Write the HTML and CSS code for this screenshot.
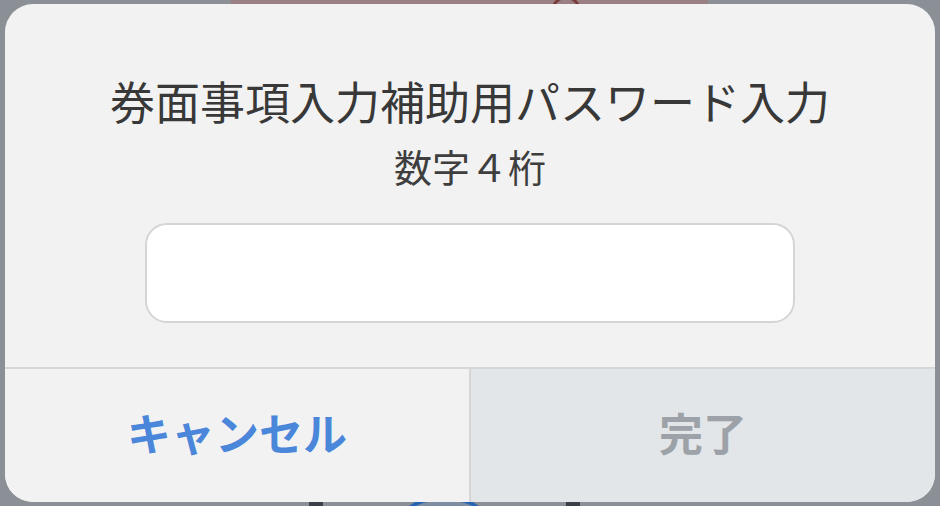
FILE: index.html
```html
<!DOCTYPE html>
<html lang="ja">
<head>
    <meta charset="UTF-8">
    <meta name="viewport" content="width=device-width, initial-scale=1">
    <title>パスワード入力</title>
    <link rel="stylesheet" href="styles.css">
</head>
<body>
    <!-- page content behind the overlay, mostly hidden -->
    <div class="backdrop">
        <div class="bg-button"><span class="bg-icon"></span></div>
        <div class="bg-bar bar-left"></div>
        <div class="bg-ring"></div>
        <div class="bg-bar bar-right"></div>
    </div>

    <div class="dialog">
        <div class="dialog-body">
            <h2 class="dialog-title">券面事項入力補助用パスワード入力</h2>
            <p class="dialog-sub">数字４桁</p>
            <input class="pin-input" type="password" inputmode="numeric" maxlength="4">
        </div>
        <div class="dialog-actions">
            <button class="action-btn cancel-btn">キャンセル</button>
            <button class="action-btn done-btn" disabled>完了</button>
        </div>
    </div>
</body>
</html>
```

FILE: styles.css
```css
html, body {
    margin: 0;
    height: 100%;
}

body {
    font-family: "Noto Sans CJK JP", "Noto Sans", sans-serif;
    background-color: #8a9096;
    overflow: hidden;
    position: relative;
}

.backdrop {
    position: absolute;
    inset: 0;
    z-index: 0;
    overflow: hidden;
}

.bg-button {
    position: absolute;
    left: 231px;
    top: -40px;
    width: 477px;
    height: 60px;
    border-radius: 12px;
    background-color: #9a8082;
}

.bg-icon {
    position: absolute;
    left: 320px;
    top: 36px;
    width: 30px;
    height: 30px;
    border: 3px solid #7b3b3d;
    border-radius: 50%;
    box-sizing: border-box;
}

.bg-bar {
    position: absolute;
    bottom: 0;
    width: 14px;
    height: 12px;
    background-color: #3b4047;
}

.bar-left {
    left: 309px;
}

.bar-right {
    left: 566px;
}

.bg-ring {
    position: absolute;
    left: 404px;
    bottom: -30px;
    width: 80px;
    height: 40px;
    border: 4px solid #2a63b0;
    border-radius: 50%;
    box-sizing: border-box;
    background-color: #7f8da2;
}

.dialog {
    position: relative;
    z-index: 1;
    width: 930px;
    height: 498px;
    margin: 4px 0 0 5px;
    background-color: #f2f2f2;
    border-radius: 28px;
    overflow: hidden;
    display: flex;
    flex-direction: column;
}

.dialog-body {
    flex: 1;
    display: flex;
    flex-direction: column;
    align-items: center;
    padding-top: 71px;
}

.dialog-title {
    margin: 0;
    font-size: 45px;
    line-height: 52px;
    font-weight: 400;
    color: #383838;
}

.dialog-sub {
    margin: 19px 0 0;
    font-size: 38px;
    line-height: 40px;
    color: #3e3e3e;
}

.pin-input {
    margin-top: 37px;
    width: 650px;
    height: 100px;
    box-sizing: border-box;
    border: 2px solid #d5d5d5;
    border-radius: 22px;
    background-color: #ffffff;
    outline: none;
}

.dialog-actions {
    height: 133px;
    display: flex;
    border-top: 2px solid #d6d6d6;
}

.action-btn {
    flex: 1;
    border: none;
    margin: 0;
    padding: 0 0 8px;
    font-family: inherit;
    font-size: 44px;
    font-weight: 700;
    background-color: #f2f2f2;
    cursor: pointer;
}

.cancel-btn {
    color: #4a86d9;
}

.done-btn {
    color: #9ca2a7;
    background-color: #e2e6e9;
    border-left: 2px solid #d6d6d6;
}
```
